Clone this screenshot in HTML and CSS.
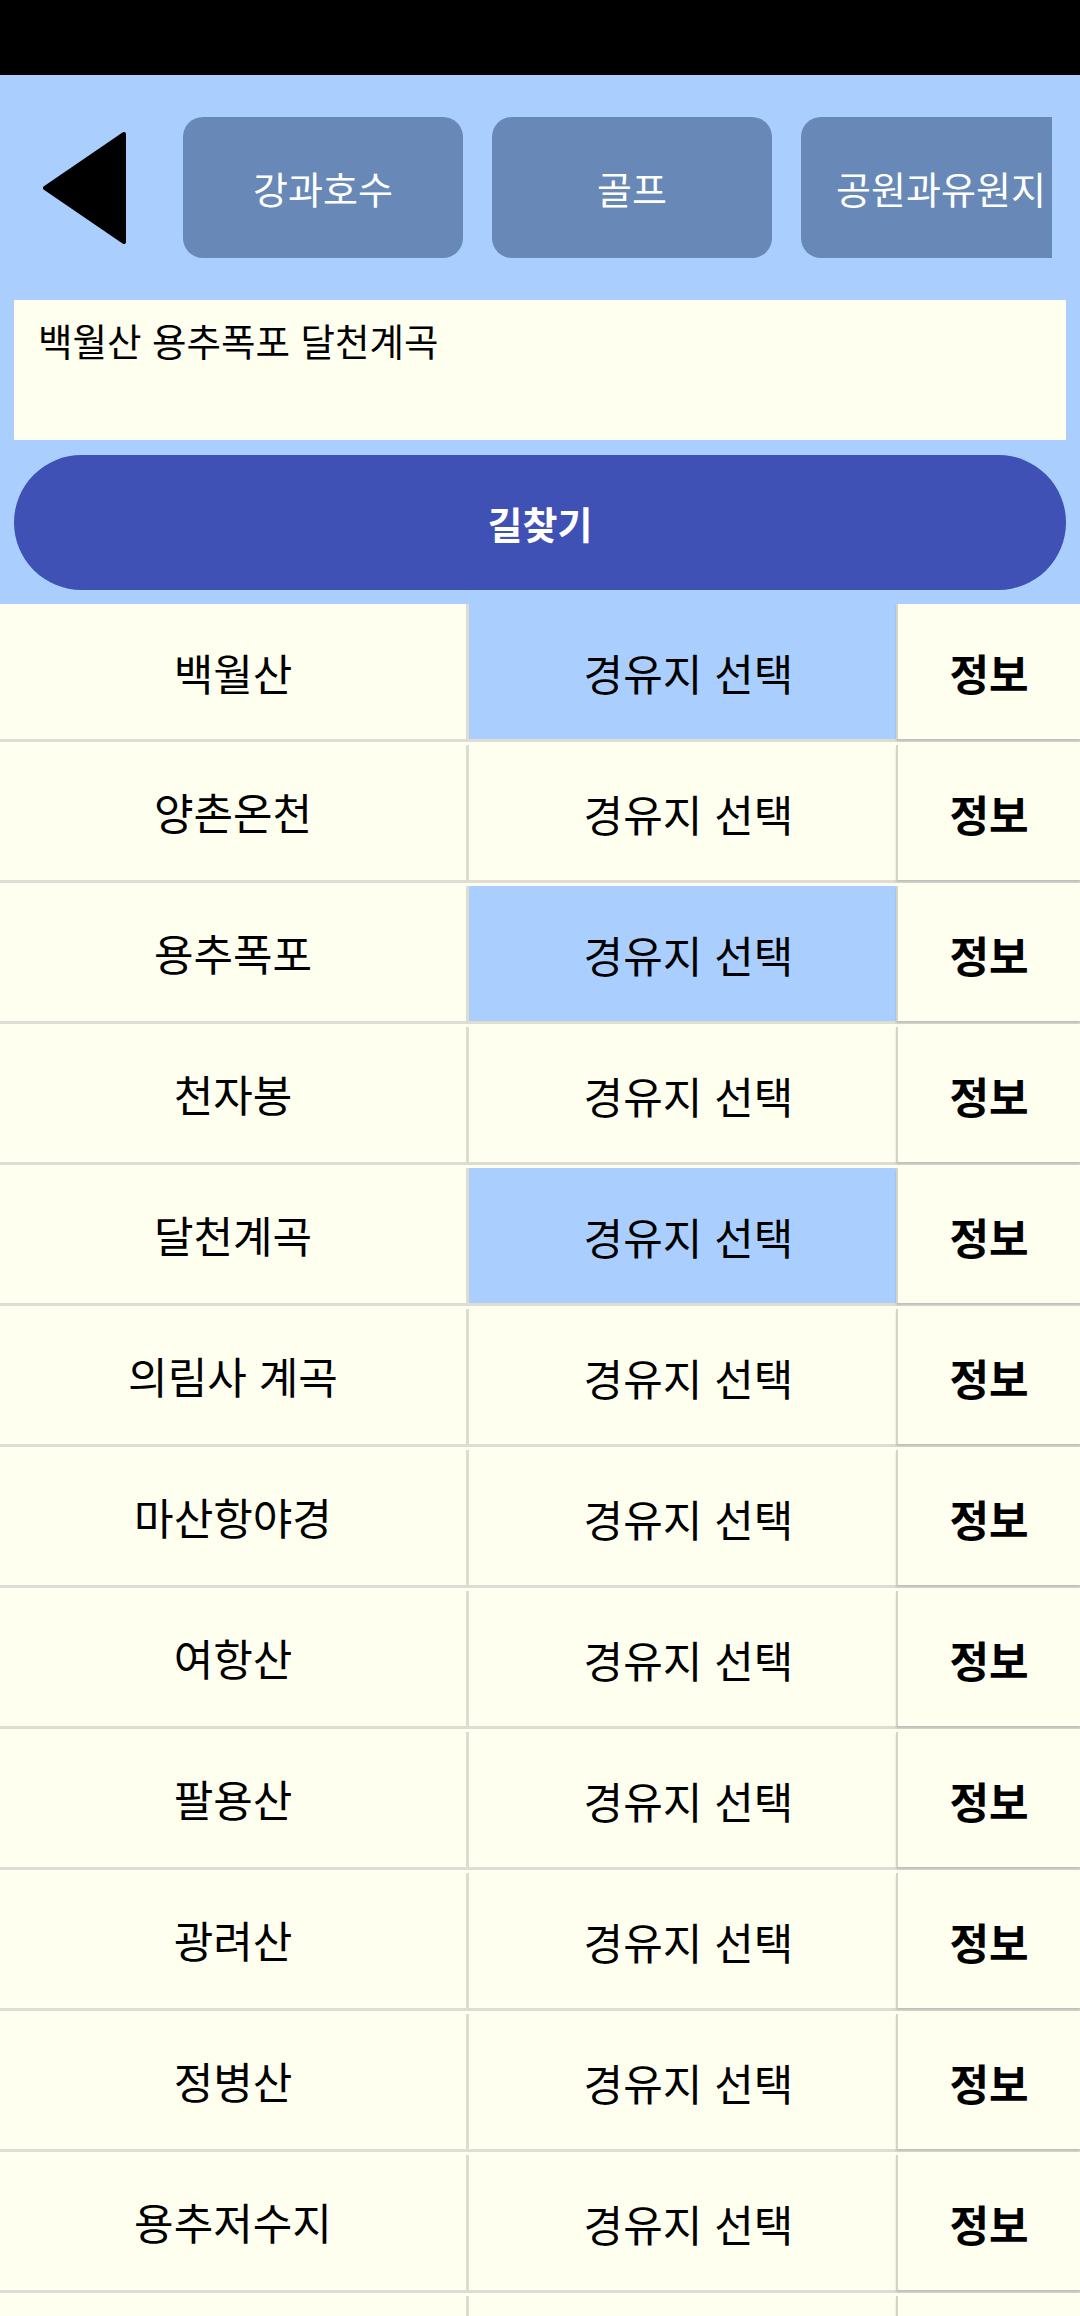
FILE: index.html
```html
<!DOCTYPE html>
<html lang="ko">
<head>
<meta charset="utf-8">
<title>길찾기</title>
<link rel="stylesheet" href="styles.css">
</head>
<body>
<div class="status"></div>
<header class="top">
  <div class="nav">
    <div class="back">
      <svg width="83" height="112" viewBox="0 0 83 112"><polygon points="81,2 2,56 81,110" fill="#000" stroke="#000" stroke-width="4" stroke-linejoin="round"/></svg>
    </div>
    <div class="cats">
      <div class="cat">강과호수</div>
      <div class="cat">골프</div>
      <div class="cat">공원과유원지</div>
    </div>
  </div>
  <div class="field">백월산 용추폭포 달천계곡</div>
  <div class="find">길찾기</div>
</header>
<main class="list">
  <div class="row sel"><div class="name">백월산</div><div class="pick">경유지 선택</div><div class="info">정보</div></div>
  <div class="row"><div class="name">양촌온천</div><div class="pick">경유지 선택</div><div class="info">정보</div></div>
  <div class="row sel"><div class="name">용추폭포</div><div class="pick">경유지 선택</div><div class="info">정보</div></div>
  <div class="row"><div class="name">천자봉</div><div class="pick">경유지 선택</div><div class="info">정보</div></div>
  <div class="row sel"><div class="name">달천계곡</div><div class="pick">경유지 선택</div><div class="info">정보</div></div>
  <div class="row"><div class="name">의림사 계곡</div><div class="pick">경유지 선택</div><div class="info">정보</div></div>
  <div class="row"><div class="name">마산항야경</div><div class="pick">경유지 선택</div><div class="info">정보</div></div>
  <div class="row"><div class="name">여항산</div><div class="pick">경유지 선택</div><div class="info">정보</div></div>
  <div class="row"><div class="name">팔용산</div><div class="pick">경유지 선택</div><div class="info">정보</div></div>
  <div class="row"><div class="name">광려산</div><div class="pick">경유지 선택</div><div class="info">정보</div></div>
  <div class="row"><div class="name">정병산</div><div class="pick">경유지 선택</div><div class="info">정보</div></div>
  <div class="row"><div class="name">용추저수지</div><div class="pick">경유지 선택</div><div class="info">정보</div></div>
  <div class="row"><div class="name">&nbsp;</div><div class="pick">&nbsp;</div><div class="info">&nbsp;</div></div>
</main>
</body>
</html>
```

FILE: styles.css
```css
html, body {
  margin: 0;
  padding: 0;
}
body {
  width: 1080px;
  height: 2316px;
  overflow: hidden;
  background: #fffff0;
  font-family: "Noto Sans CJK KR", "Noto Sans", sans-serif;
  color: #000;
}
.status {
  height: 75px;
  background: #000;
}
.top {
  background: #aacfff;
  padding: 42px 0 14px;
}
.nav {
  display: flex;
  align-items: center;
  height: 141px;
}
.back {
  flex: none;
  width: 183px;
  box-sizing: border-box;
  padding-left: 43px;
}
.back svg {
  display: block;
}
.cats {
  display: flex;
  gap: 29px;
  width: 869px;
  overflow: hidden;
}
.cat {
  flex: none;
  width: 280px;
  height: 141px;
  border-radius: 20px;
  background: #6889b8;
  color: #fff;
  font-size: 38px;
  display: flex;
  align-items: center;
  justify-content: center;
  white-space: nowrap;
}
.field {
  margin: 42px 14px 0;
  height: 140px;
  box-sizing: border-box;
  padding: 17px 24px;
  background: #fffff0;
  font-size: 37.5px;
  line-height: 1.2;
}
.find {
  margin: 15px 14px 0;
  height: 135px;
  border-radius: 68px;
  background: #3f51b5;
  color: #fff;
  font-weight: 700;
  font-size: 38px;
  display: flex;
  align-items: center;
  justify-content: center;
}
.list {
  display: block;
}
.row {
  display: grid;
  grid-template-columns: 466px 430px 184px;
  height: 141px;
  box-sizing: border-box;
  border-bottom: 3px solid #dedcd3;
  background: #fffff0;
  font-size: 43px;
}
.row:first-child {
  height: 138px;
}
.name, .pick, .info {
  display: flex;
  align-items: center;
  justify-content: center;
  white-space: nowrap;
}
.pick, .info {
  align-self: end;
  height: 135px;
  box-sizing: border-box;
}
.pick {
  border-left: 3px solid #dcdcd2;
  padding-left: 12px;
}
.sel .pick {
  background: #aacfff;
}
.info {
  border-left: 2px solid #d4d4ca;
  font-weight: 700;
  box-shadow: 0 2px 2px rgba(0, 0, 0, 0.14);
}
```
